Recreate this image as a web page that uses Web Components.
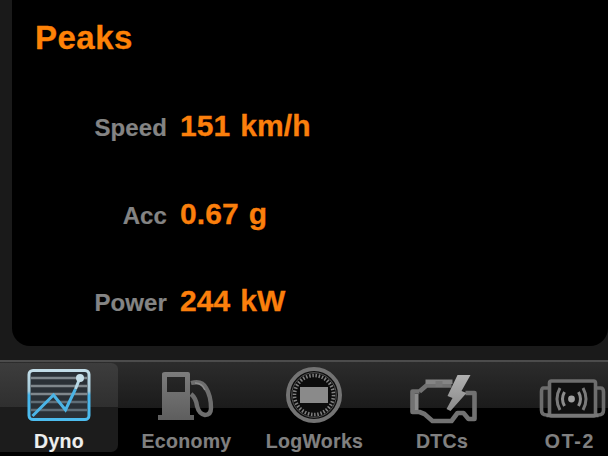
<!DOCTYPE html>
<html><head><meta charset="utf-8">
<style>
html,body{margin:0;padding:0;background:#000;overflow:hidden}
body{width:608px;height:456px;font-family:"Liberation Sans",Arial,sans-serif}
</style></head><body>
<dyno-screen>
  <peaks-panel title-text="Peaks">
    <peak-row label="Speed" value="151 km/h"></peak-row>
    <peak-row label="Acc" value="0.67 g"></peak-row>
    <peak-row label="Power" value="244 kW"></peak-row>
  </peaks-panel>
  <tab-bar>
    <tab-item label="Dyno" icon="dyno" active></tab-item>
    <tab-item label="Economy" icon="economy"></tab-item>
    <tab-item label="LogWorks" icon="logworks"></tab-item>
    <tab-item label="DTCs" icon="dtcs"></tab-item>
    <tab-item label="OT-2" icon="ot2"></tab-item>
  </tab-bar>
</dyno-screen>
<script>
class DynoScreen extends HTMLElement{constructor(){super();this.attachShadow({mode:'open'}).innerHTML=`<style>
:host{display:flex;flex-direction:column;width:608px;height:456px;background:#1a1a1a;overflow:hidden}
</style><slot></slot>`}}
class PeaksPanel extends HTMLElement{constructor(){super();this.attachShadow({mode:'open'}).innerHTML=`<style>
:host{display:block;box-sizing:border-box;height:346px;margin-left:12px;margin-bottom:14px;background:#000;border-radius:0 0 18px 18px;padding:19px 0 0 23px;flex:none}
h1{margin:0 0 50px;font:bold 33px/38px "Liberation Sans",Arial,sans-serif;letter-spacing:.5px;-webkit-text-stroke:.3px #fe8207;color:#fe8207}
.rows{display:flex;flex-direction:column;gap:49.5px;margin-left:-35px}
</style><h1>${this.getAttribute('title-text')}</h1><div class="rows"><slot></slot></div>`}}
class PeakRow extends HTMLElement{constructor(){super();this.attachShadow({mode:'open'}).innerHTML=`<style>
:host{display:flex;align-items:baseline;height:38px;line-height:38px}
.l{width:167px;text-align:right;font:bold 24px/38px "Liberation Sans",Arial,sans-serif;letter-spacing:.1px;-webkit-text-stroke:.2px #848484;color:#848484}
.v{margin-left:13px;font:bold 30px/38px "Liberation Sans",Arial,sans-serif;letter-spacing:.1px;word-spacing:1.500px;-webkit-text-stroke:.3px #fb7f0c;color:#fb7f0c}
</style><span class="l">${this.getAttribute('label')}</span><span class="v">${this.getAttribute('value')}</span>`}}
class TabBar extends HTMLElement{constructor(){super();this.attachShadow({mode:'open'}).innerHTML=`<style>
:host{display:flex;height:96px;box-sizing:border-box;border-top:2px solid #4c4c4c;background:linear-gradient(#2c2c2c,#1b1b1b 46px,#000 46px);flex:none}
</style><slot></slot>`}}
const grad=(id,a,b)=>`<linearGradient id="${id}" x1="0" y1="0" x2="0" y2="1"><stop offset="0" stop-color="${a}"/><stop offset="1" stop-color="${b}"/></linearGradient>`;
const icons={
dyno:`<svg width="75" height="63" viewBox="1.5 1 75 63"><defs><linearGradient id="g" x1="0" y1="0" x2="0" y2="1"><stop offset="0" stop-color="#c2dde8"/><stop offset=".42" stop-color="#a6cbda"/><stop offset=".5" stop-color="#46b6ec"/><stop offset="1" stop-color="#4dbcee"/></linearGradient></defs>
<rect x="8.500" y="8.500" width="60" height="49" rx="4" fill="#2a3137" stroke="url(#g)" stroke-width="3"/>
<path d="M10 16H67M10 24H67M10 32H67" stroke="#7f878c" stroke-width="2.400"/><path d="M10 40H67M10 48H67" stroke="#5f6d76" stroke-width="2.400"/>
<path d="M12 54L33 33L45 48L55 27" fill="none" stroke="#4bb4e6" stroke-width="3"/><path d="M55 27L59 17" fill="none" stroke="#b6d9e7" stroke-width="3"/>
<circle cx="59.500" cy="16" r="4" fill="#c6dfe8"/></svg>`,
economy:`<svg width="75" height="63" viewBox="-1 1 75 63"><defs>${grad('e','#7c7c7c','#5e5e5e')}</defs><path fill-rule="evenodd" d="M15 10H38Q40 10 40 12V53H44V58H8V53H12V12Q12 10 15 10ZM17 15V30H35V15Z" fill="url(#e)"/><path d="M41 21Q52 18 56 26Q61 34 61 46Q61 53 55 53Q49 52 47 44Q46 36 41 32" fill="none" stroke="#6e6e6e" stroke-width="4.400"/><path d="M45 21Q52 21 55 28" fill="none" stroke="#8c8c8c" stroke-width="1.600"/></svg>`,
logworks:`<svg width="75" height="63" viewBox="0 1 75 63"><circle cx="37" cy="33" r="26" fill="#0c0c0c" stroke="#737373" stroke-width="4"/><circle cx="37" cy="33" r="22.300" fill="none" stroke="#555" stroke-width="1"/><circle cx="37" cy="33" r="19.500" fill="none" stroke="#808080" stroke-width="3.600" stroke-dasharray="1.500 1.700"/><rect x="23" y="25" width="28" height="16" fill="#8a8a8a"/></svg>`,
dtcs:`<svg width="75" height="63" viewBox="-.5 -3 75 63"><defs>${grad('b','#b0b0b0','#8a8a8a')}</defs><g transform="translate(0,4)"><path d="M14 21.500H7V42H14L19 44L27 51H46L52 43H58L63 49H69V23H60M14 21.500L21 15.500H46" fill="none" stroke="#727272" stroke-width="4.600" stroke-linejoin="round"/><path d="M11 24V40" stroke="#8c8c8c" stroke-width="4"/><path d="M20 9.500H47V14H20Z" fill="#858585"/><path d="M30 11V17H37V11Z" fill="#777"/><path d="M52 5H65L56 21L61 23L45 41L41 39L47 28L42 26Z" fill="url(#b)"/></g></svg>`,
ot2:`<svg width="75" height="63" viewBox="-.5 -3 75 63"><g transform="translate(0,4)"><path d="M15 18H10Q8 18 8 22V40Q8 45 13 45H15M62 18H67Q70 18 70 22V40Q70 45 65 45H62" fill="none" stroke="#6c6c6c" stroke-width="3.600"/><rect x="16" y="11" width="46" height="35" rx="2" fill="#101010" stroke="#6e6e6e" stroke-width="3.600"/><path d="M13 45.500H65" stroke="#777" stroke-width="3.400"/>
<g fill="none" stroke="#8c8c8c" stroke-width="3"><path d="M31 22Q27 29 31 36M45 22Q49 29 45 36"/></g><g fill="none" stroke="#7a7a7a" stroke-width="3"><path d="M26.500 18Q20.500 29 26.500 40M49.500 18Q55.500 29 49.500 40"/></g><circle cx="38" cy="29" r="3.400" fill="#a0a0a0"/></g></svg>`};
const W={dyno:118,economy:137,logworks:119,dtcs:136,ot2:120};
class TabItem extends HTMLElement{constructor(){super();const ic=this.getAttribute('icon');this.attachShadow({mode:'open'}).innerHTML=`<style>
:host{display:flex;flex-direction:column;align-items:center;width:${W[ic]}px;height:90px;box-sizing:border-box;flex:none;padding-top:1px;border-radius:0 7px 7px 0;background-clip:content-box}
:host([active]){background:linear-gradient(#3d3d3d,#2f2f2f 45px,#1c1c1c 45px,#1c1c1c);background-clip:content-box}
.i{height:63px;display:flex;justify-content:center}
svg{display:block;filter:blur(.5px)}
.t{font:bold 19.5px/22px "Liberation Sans",Arial,sans-serif;letter-spacing:.3px;-webkit-text-stroke:.15px currentColor;color:#808080;margin-top:4px}
:host([icon="ot2"]) .t{letter-spacing:1.8px}
:host([active]) .t{color:#eee}
</style><div class="i">${icons[ic]}</div><div class="t">${this.getAttribute('label')}</div>`}}
customElements.define('dyno-screen',DynoScreen);
customElements.define('peaks-panel',PeaksPanel);
customElements.define('peak-row',PeakRow);
customElements.define('tab-bar',TabBar);
customElements.define('tab-item',TabItem);
</script>
</body></html>
